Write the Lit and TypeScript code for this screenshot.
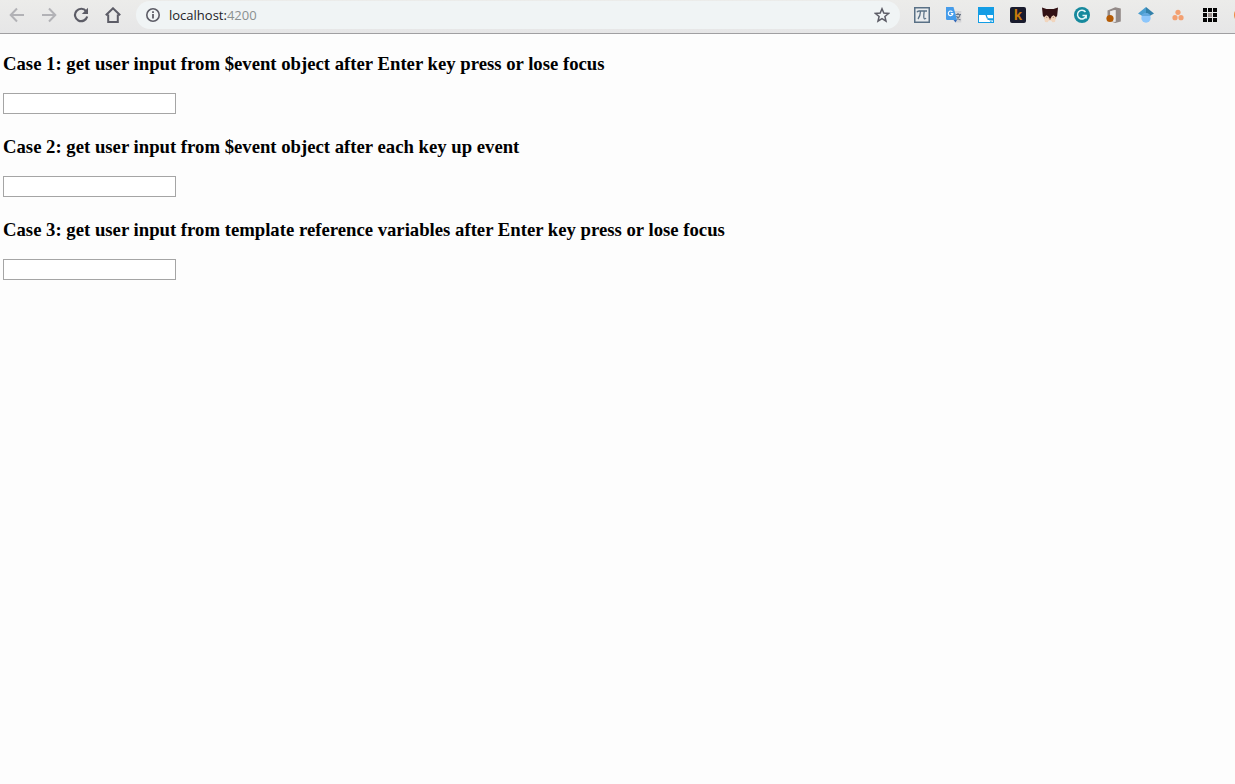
import { LitElement, html, css, svg, TemplateResult } from "lit";
import { customElement } from "lit/decorators.js";

const icon = (shape: TemplateResult) =>
  html`<svg viewBox="0 0 16 16" width="16" height="16" aria-hidden="true">${shape}</svg>`;

const navItems = [
  { label: "Back", off: true, shape: svg`<path d="M15 8H2M8 1.500 1.700 8 8 14.500" fill="none" stroke="#b2b2b6" stroke-width="2"/>` },
  { label: "Forward", off: true, shape: svg`<path d="M1 8h13M8 1.500 14.300 8 8 14.500" fill="none" stroke="#b2b2b6" stroke-width="2"/>` },
  { label: "Reload", off: false, shape: svg`<path d="M13.200 4.300A6.200 6.200 0 1 0 14.200 9.500" fill="none" stroke="#5c5c66" stroke-width="2.200"/><path d="M15 .8V7H8.800z" fill="#5c5c66"/>` },
  { label: "Home", off: false, shape: svg`<path d="M3.200 7.500V15h9.600V7.500M.8 8.300 8 1.300l7.200 7" fill="none" stroke="#5c5c66" stroke-width="2"/>` },
];

const extensions = [
  { label: "Math", shape: svg`<rect x=".75" y=".75" width="14.500" height="14.500" fill="#e9ecee" stroke="#5a7186" stroke-width="1.500"/><path d="M3 5.300Q3.500 4 5 4h8M6.500 4.200Q6.300 9 4 12M10.200 4.200Q9.300 11 10.300 11.700 11.200 12.200 12 11" fill="none" stroke="#5a7186" stroke-width="1.300"/>` },
  { label: "Translate", shape: svg`<path d="M6 4h9.300v11.500H9.500z" fill="#d5d5d7"/><path d="M9.500 7.500H15M12 6v1.500M14 8q-1 3-3.500 4.500M10.500 9q1 2.500 4 4" fill="none" stroke="#6c7787" stroke-width="1.200"/><path d="M0 0h7.500L11 13H1.200Q0 13 0 11.800z" fill="#459cea"/><path d="M7.500 13H11l-1.500 2.500z" fill="#3368b8"/><path d="M6.400 4.900A2.300 2.300 0 1 0 6.900 6.600H4.800" fill="none" stroke="#fff" stroke-width="1.100"/>` },
  { label: "Window", shape: svg`<path d="M0 0h16v16H0z" fill="#139de5"/><path d="M1 8h6.200q.6 0 .8 1.500.3 2.500 2.500 2.500l2 3H1z" fill="#fff"/><path d="M9 8h6v5.500h-4.500L15 15v-3.800h-4.500Q9 11 9 8z" fill="#fff"/><path d="M9.500 12.500H15" stroke="#139de5"/>` },
  { label: "K", shape: svg`<rect width="16" height="16" rx="2" fill="#191b2d"/><text x="8" y="13" text-anchor="middle" font-family="Liberation Sans" font-size="15" font-weight="700" fill="#c77b0b">k</text>` },
  { label: "Fox", shape: svg`<path d="M0 .5 4.500 2h7L16 .5 15.200 8.500 13 12H3L.8 8.500z" fill="#321114"/><path d="M2 10.200 4.300 8.200l1.900 1 1.300 2.600h1l1.300-2.600 1.900-1L14 10.200l-1 4.800-2.500.3L9 13.500H7l-1.500 1.800L3 15z" fill="#f1d5bd"/><path d="m6.700 11.500 1.300 1.500 1.300-1.500z" fill="#a3705c"/><path d="M4 10.300h1.300M10.700 10.300H12" stroke="#a5826f"/>` },
  { label: "Grammar", shape: svg`<circle cx="8" cy="8" r="8" fill="#16899d"/><path d="M11.500 5A4.400 4.400 0 1 0 12.200 8.500H8.500M12.200 8.300v3.200" fill="none" stroke="#e5f5f7" stroke-width="1.500"/>` },
  { label: "Office", shape: svg`<path d="M1.500 3.500 9.300.2l5.500 1.300v13L9.300 16 5 14.500l4.500.5V3L4.300 4.300v7L1.500 12.500z" fill="#938a88"/><path d="M4.300 4.300 9.500 3v11.500l-5.200-1z" fill="#ebe9e8"/><circle cx="4" cy="11.500" r="3.600" fill="#b45b05"/>` },
  { label: "Scholar", shape: svg`<path d="m8 0-8 6.500 4 2.200Q5 6.800 8 6.800z" fill="#4a9ed0"/><path d="m8 0 8 6.500-4 2.200Q11 6.800 8 6.800z" fill="#3280aa"/><circle cx="8" cy="11" r="4.700" fill="#8cc6fb"/><path d="M3.600 9a4.800 4.800 0 0 1 8.800 0z" fill="#62a9df"/>` },
  { label: "Tasks", shape: svg`<g fill="#f3a071"><circle cx="8" cy="5.300" r="2.600"/><circle cx="5" cy="10.700" r="2.600"/><circle cx="11" cy="10.700" r="2.600"/></g>` },
  { label: "Apps", shape: svg`<path d="M1 1h4v4H1zm5 0h4v4H6zm5 0h4v4h-4zM1 6h4v4H1zm10 0h4v4h-4zM1 11h4v4H1zm5 0h4v4H6zm5 0h4v4h-4z" fill="#050505"/><path d="M6 6h4v4H6z" fill="#988d8b"/>` },
];

const cases = [
  { id: "case1", title: "Case 1: get user input from $event object after Enter key press or lose focus" },
  { id: "case2", title: "Case 2: get user input from $event object after each key up event" },
  { id: "case3", title: "Case 3: get user input from template reference variables after Enter key press or lose focus" },
];

@customElement("app-root")
export class AppRoot extends LitElement {
  static styles = css`
    :host {
      display: block;
      min-height: 100vh;
      background: #fdfdfd;
      color: #000;
      overflow: hidden;
    }
    .toolbar {
      display: flex;
      box-sizing: border-box;
      height: 34px;
      padding: 0 0 3px 1px;
      border-bottom: 1px solid #a09fa2;
      background: linear-gradient(#ececea, #e6e6e7);
      overflow: hidden;
    }
    .group {
      display: flex;
      flex: none;
    }
    .tool {
      display: grid;
      place-items: center;
      width: 32px;
      height: 30px;
      padding: 0;
      border: 0;
      background: none;
    }
    .partial {
      margin-right: -23px;
    }
    .address {
      display: flex;
      align-items: center;
      flex: 1;
      height: 28px;
      margin: 1px 6px 0 7px;
      padding: 0 10px;
      gap: 7px;
      border-radius: 14px;
      background: #f0f4f5;
    }
    .url {
      flex: 1;
      font: 13px/20px "Open Sans", sans-serif;
      color: #1c2226;
    }
    .port {
      color: #8a9090;
    }
    .star {
      width: 16px;
      height: 28px;
    }
    .page {
      padding: 19px 3px 0;
      font-family: "Liberation Serif", serif;
    }
    .case {
      display: flex;
      flex-direction: column;
      align-items: flex-start;
      gap: 19px;
      margin-bottom: 22px;
    }
    .title {
      margin: 0;
      line-height: 21px;
    }
    .field {
      box-sizing: border-box;
      width: 173px;
      height: 21px;
      padding: 1px 2px;
      border: 1px solid #a5a5a5;
      background: #fff;
      font: 13px "Liberation Sans", sans-serif;
    }
  `;

  render() {
    return html`
      <header class="toolbar">
        <nav class="group">
          ${navItems.map((n) => html`<button class="tool" aria-label=${n.label} ?disabled=${n.off}>${icon(n.shape)}</button>`)}
        </nav>
        <div class="address">
          ${icon(svg`<circle cx="7" cy="8" r="6.200" fill="none" stroke="#5c5c66" stroke-width="1.600"/><path d="M7 7v4.500M7 4.300v1.700" stroke="#5c5c66" stroke-width="1.800"/>`)}
          <span class="url">localhost:<span class="port">4200</span></span>
          <button class="tool star" aria-label="Bookmark">
            ${icon(svg`<path d="m8 1.800 1.800 4.300 4.700.4-3.600 3 1.100 4.600L8 11.700l-4 2.400 1.100-4.600-3.600-3 4.700-.4z" fill="none" stroke="#5c5c66" stroke-width="1.500"/>`)}
          </button>
        </div>
        <div class="group">
          ${extensions.map((e) => html`<button class="tool" aria-label=${e.label}>${icon(e.shape)}</button>`)}
          <button class="tool partial" aria-label="Profile">
            ${icon(svg`<circle cx="8" cy="8" r="8" fill="#f0883e"/>`)}
          </button>
        </div>
      </header>
      <main class="page">
        ${cases.map(
          (c) => html`<section class="case">
            <h3 class="title"><label for=${c.id}>${c.title}</label></h3>
            <input class="field" id=${c.id} type="text" />
          </section>`
        )}
      </main>
    `;
  }
}
